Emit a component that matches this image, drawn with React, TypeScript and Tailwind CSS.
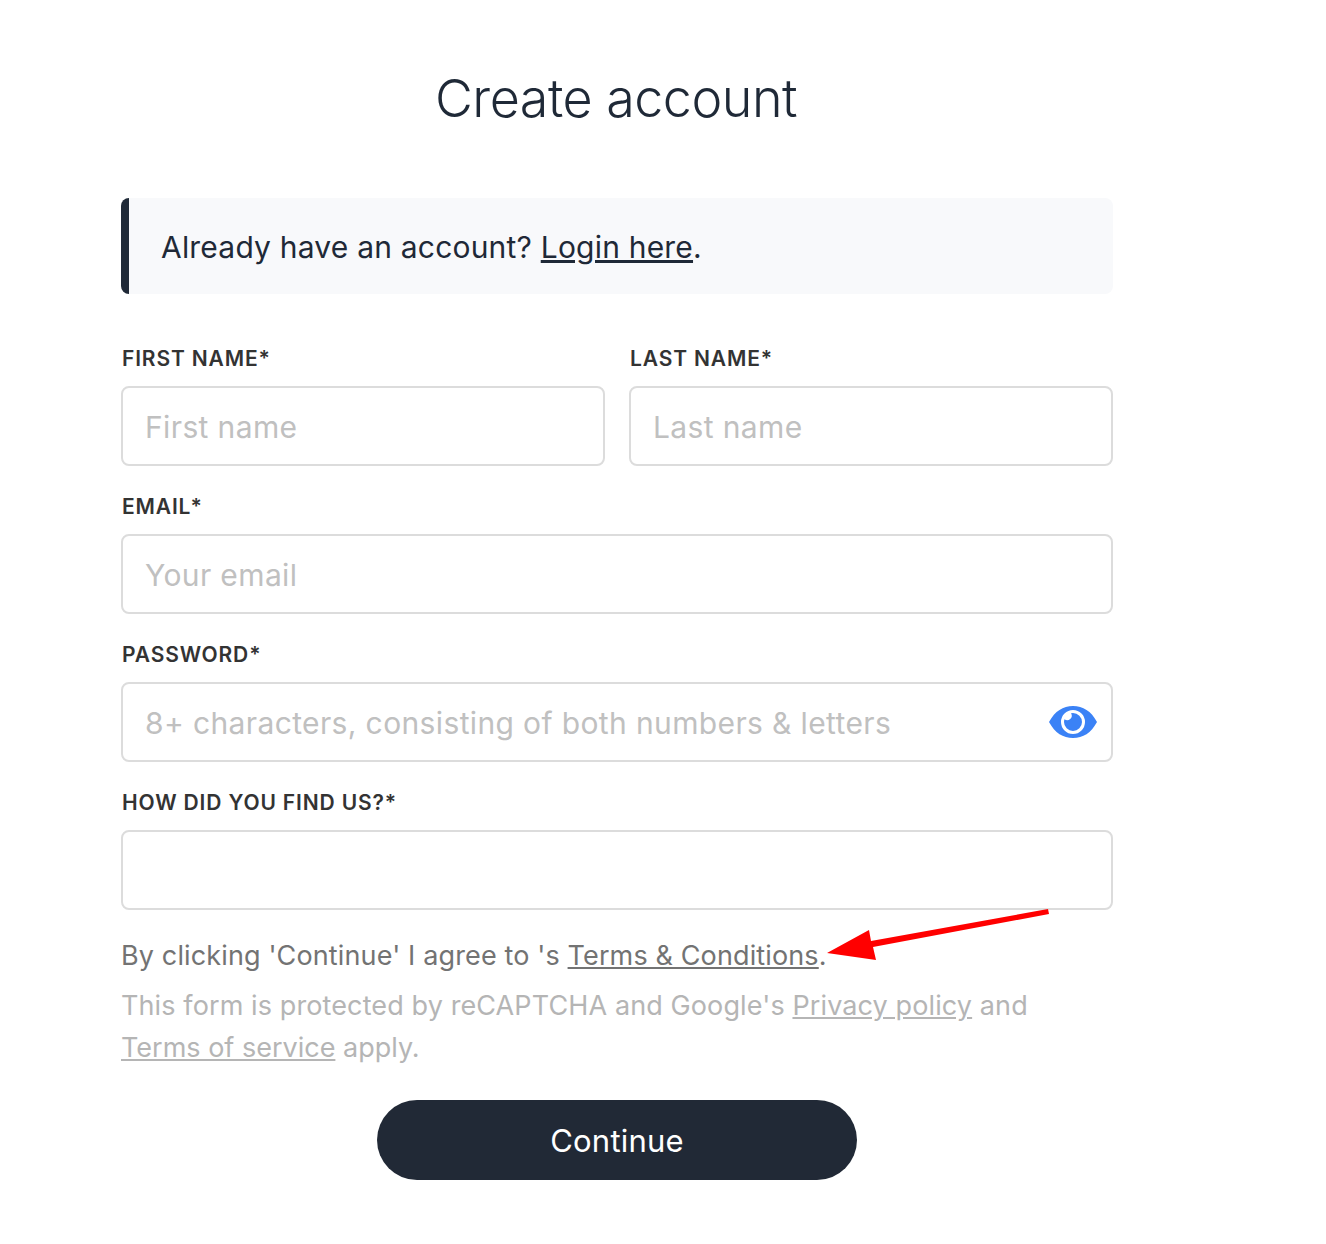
export default function App() {
  const font = { fontFamily: "Inter, 'Noto Sans', sans-serif" };
  return (
    <div style={font} className="relative w-[1326px] h-[1244px] bg-white pl-[121px] pt-[67px]">
      <div className="w-[992px]">
        <h1 className="text-center pr-[2px] text-[52px] leading-[64px] font-light text-[#1f2937] tracking-[-0.5px]">Create account</h1>
        <div className="mt-[67px] h-[96px] rounded-[8px] bg-[#f8f9fb] border-l-[8px] border-[#1f2937] pl-[33px] flex items-center text-[#1f2937]">
          <p className="text-[30px] tracking-[0.2px] pt-[2px] -ml-[1px]">Already have an account? <a className="underline">Login here</a>.</p>
        </div>
        <div className="mt-[51px] grid grid-cols-2 gap-x-[24px] gap-y-[27px]">
          <Field label="FIRST NAME*" placeholder="First name" />
          <Field label="LAST NAME*" placeholder="Last name" />
          <div className="col-span-2"><Field label="EMAIL*" placeholder="Your email" /></div>
          <div className="col-span-2"><Field label="PASSWORD*" placeholder="8+ characters, consisting of both numbers & letters" eye /></div>
          <div className="col-span-2"><Field label="HOW DID YOU FIND US?*" placeholder="" /></div>
        </div>
        <p className="mt-[28px] text-[27px] leading-[36px] text-[#737373] tracking-[0.13px]">By clicking 'Continue' I agree to 's <a className="underline">Terms &amp; Conditions</a>.</p>
        <p className="mt-[11px] text-[27px] leading-[42px] text-[#b5b5b5]"><span className="tracking-[0.11px]">This form is protected by reCAPTCHA and Google's <a className="underline">Privacy policy</a> and</span><br /><a className="underline">Terms of service</a> apply.</p>
        <div className="mt-[31px] flex justify-center">
          <button className="w-[480px] h-[80px] pt-[2px] rounded-full bg-[#212936] text-white text-[31px] font-normal tracking-[0.2px]">Continue</button>
        </div>
      </div>
      <svg className="absolute left-0 top-0 pointer-events-none" width="1326" height="1244" viewBox="0 0 1326 1244">
        <polygon points="1048,909 1049,914 873,947 876,960 827,953 869,930 871,941" fill="#ff0000" />
      </svg>
    </div>
  );
}

function Field({ label, placeholder, eye }: { label: string; placeholder: string; eye?: boolean }) {
  return (
    <div>
      <label className="block h-[41px] pl-[1px] text-[21px] leading-[28px] font-semibold text-[#333333] tracking-[0.85px]">{label}</label>
      <div className="relative h-[80px] rounded-[8px] border-2 border-[#dcdcdc] flex items-center pl-[22px] pr-[70px] pt-[2px] text-[30px] tracking-[0.37px] text-[#c0c0c0]">
        <span>{placeholder}</span>
        {eye && (
          <svg className="absolute right-[14px] top-[20px]" width="48" height="36" viewBox="0 0 48 36">
            <path fillRule="evenodd" fill="#3b82f6" d="M0 18C6 7 14 2 24 2s18 5 24 16c-6 11-14 16-24 16S6 29 0 18zM24 6a12 12 0 1 0 0 24 12 12 0 0 0 0-24z" />
            <path fill="#3b82f6" d="M24 9a9 9 0 1 1-9 9c0-1 .2-2 .5-2.800A4.500 4.500 0 0 0 22 9.200 9 9 0 0 1 24 9z" />
          </svg>
        )}
      </div>
    </div>
  );
}
